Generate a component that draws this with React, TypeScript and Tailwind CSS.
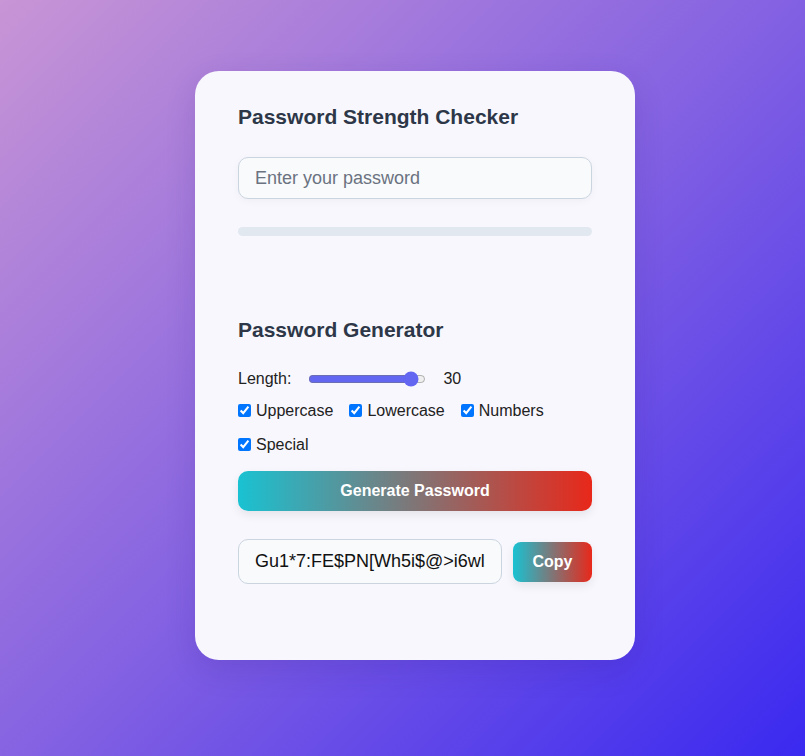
import { useState } from "react";

const font = { fontFamily: '"Liberation Sans", Arial, sans-serif' };

export default function App() {
  const [length, setLength] = useState(30);
  const [opts, setOpts] = useState({
    Uppercase: true,
    Lowercase: true,
    Numbers: true,
    Special: true,
  });
  const [output] = useState("Gu1*7:FE$PN[Wh5i$@>i6wlZ2q#Lm9");

  return (
    <div
      className="flex min-h-[756px] w-full items-start justify-center bg-[linear-gradient(135deg,#c895d5_0%,#8462e2_50%,#3a29f0_100%)] pl-[25px] pt-[71px]"
      style={font}
    >
      <div className="flex w-[440px] flex-col rounded-[24px] bg-[#f8f7fd] px-[43px] pb-[76px] pt-[31px] shadow-[0_10px_30px_rgba(40,20,120,0.15)]">
        <h2 className="text-[21px] font-bold leading-[30px] text-[#2d3748]">
          Password Strength Checker
        </h2>
        <input
          type="password"
          placeholder="Enter your password"
          className="mt-[25px] h-[42px] w-full rounded-[10px] border border-[#cbd5e0] bg-[#f8fafc] px-4 text-[18px] text-[#1a202c] placeholder:text-[#6b7280] shadow-[0_2px_8px_rgba(0,0,0,0.04)] outline-none"
        />
        <div className="mt-[28px] h-[9px] w-full rounded-full bg-[#e2e8f0]" />
        <div className="h-[79px]" />

        <h2 className="text-[21px] font-bold leading-[30px] text-[#2d3748]">
          Password Generator
        </h2>
        <div className="mt-[22px] flex items-center text-[16px] text-[#222]">
          <span>Length:</span>
          <input
            type="range"
            min={4}
            max={32}
            value={length}
            onChange={(e) => setLength(Number(e.target.value))}
            className="ml-[17px] w-[118px] accent-[#6366f1]"
          />
          <span className="ml-[17px]">{length}</span>
        </div>
        <div className="mt-[10px] flex flex-wrap gap-x-4 gap-y-[14px] text-[16px] text-[#222]">
          {(Object.keys(opts) as (keyof typeof opts)[]).map((k) => (
            <label key={k} className="flex h-5 items-center gap-[5px]">
              <input
                type="checkbox"
                checked={opts[k]}
                onChange={() => setOpts({ ...opts, [k]: !opts[k] })}
                className="m-0 -mt-[2px] h-[13px] w-[13px]"
              />
              {k}
            </label>
          ))}
        </div>
        <button
          type="button"
          className="mt-4 h-10 w-full rounded-[10px] bg-[linear-gradient(90deg,#19c2d2,#e8281a)] text-[16px] font-bold text-white shadow-[0_4px_10px_rgba(0,0,0,0.08)]"
        >
          Generate Password
        </button>
        <div className="mt-7 flex items-center gap-[11px]">
          <input
            readOnly
            value={output}
            className="h-[45px] min-w-0 flex-1 rounded-[10px] border border-[#cbd5e0] bg-[#f8fafc] px-4 text-[18px] text-[#111] outline-none"
          />
          <button
            type="button"
            className="h-10 w-[79px] rounded-[8px] bg-[linear-gradient(90deg,#19c2d2,#e8281a)] text-[16px] font-bold text-white shadow-[0_4px_10px_rgba(0,0,0,0.08)]"
          >
            Copy
          </button>
        </div>
      </div>
    </div>
  );
}
